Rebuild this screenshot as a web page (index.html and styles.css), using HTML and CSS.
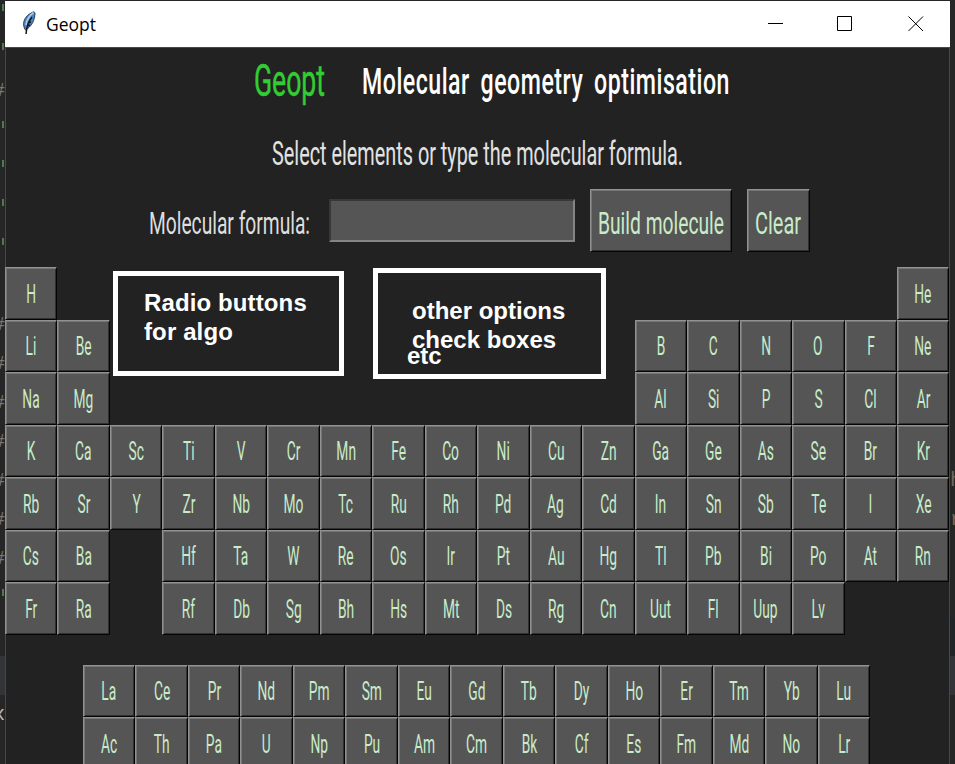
FILE: index.html
```
<!DOCTYPE html>
<html lang="en">
<head>
<meta charset="utf-8">
<title>Geopt</title>
<link rel="stylesheet" href="styles.css">
</head>
<body>
<div class="desktop">
<div class="gutter left">
<i class="tick"></i><i class="tick"></i><i>#</i><i class="tick"></i><i class="tick"></i><i class="tick"></i><i class="tick"></i><i></i><i>#</i><i>#</i><i>#</i><i>#</i><i>#</i><i>#</i><i>#</i><i class="tick"></i><i></i><i class="patch"></i><i class="bright">x</i>
</div>
<main class="window">
<header class="titlebar">
<svg class="feather" width="16" height="24" viewBox="0 0 16 24"><path d="M4.500 19C.8 14 2 5.500 12 1c2-.6 2.300 1 1.700 4-.8 6-4 11-9.200 14z" fill="#4b86c8" stroke="#333b48"/><path d="M12.500 1.500C9 4 6 8 5 14" stroke="#a8cdf0" stroke-width="1.600" fill="none"/><path d="M11 6C8 10 6 13 5 23M7 12l3-1M6 15l3-1" stroke="#101820" stroke-width="1.500" fill="none"/></svg>
<svg class="caption" width="60" height="46"><text x="1" y="30" textLength="50" lengthAdjust="spacingAndGlyphs">Geopt</text></svg>
<svg class="controls" width="182" height="46" fill="none" stroke="#000"><path d="M0 22.500h15M69.500 15.500h14v14h-14z"/><path d="M140.500 15.500l14.500 14.500M155 15.500l-14.500 14.500"/></svg>
</header>
<section class="content">
<svg class="row" width="943" height="60"><text class="brand" x="248" y="47.500" textLength="71" lengthAdjust="spacingAndGlyphs">Geopt</text><text class="heading" x="356" y="46" textLength="368" lengthAdjust="spacingAndGlyphs">Molecular geometry optimisation</text></svg>
<svg class="row" width="943" height="70"><text class="prompt" x="266" y="57" textLength="411" lengthAdjust="spacingAndGlyphs">Select elements or type the molecular formula.</text></svg>
<div class="form">
<svg class="label" width="162" height="63"><text x="0" y="45" textLength="161" lengthAdjust="spacingAndGlyphs">Molecular formula:</text></svg>
<input class="entry" type="text" aria-label="Molecular formula">
<button class="action build"><svg width="128" height="61"><text x="0" y="44" textLength="126" lengthAdjust="spacingAndGlyphs">Build molecule</text></svg></button>
<button class="action clear"><svg width="48" height="61"><text x="0" y="44" textLength="46" lengthAdjust="spacingAndGlyphs">Clear</text></svg></button>
</div>
<div class="table main">
<button><b>H</b></button><i class="gap16"></i><button><b>He</b></button>
<button><b>Li</b></button><button><b>Be</b></button><i class="gap10"></i><button><b>B</b></button><button><b>C</b></button><button><b>N</b></button><button><b>O</b></button><button><b>F</b></button><button><b>Ne</b></button>
<button><b>Na</b></button><button><b>Mg</b></button><i class="gap10"></i><button><b>Al</b></button><button><b>Si</b></button><button><b>P</b></button><button><b>S</b></button><button><b>Cl</b></button><button><b>Ar</b></button>
<button><b>K</b></button><button><b>Ca</b></button><button><b>Sc</b></button><button><b>Ti</b></button><button><b>V</b></button><button><b>Cr</b></button><button><b>Mn</b></button><button><b>Fe</b></button><button><b>Co</b></button><button><b>Ni</b></button><button><b>Cu</b></button><button><b>Zn</b></button><button><b>Ga</b></button><button><b>Ge</b></button><button><b>As</b></button><button><b>Se</b></button><button><b>Br</b></button><button><b>Kr</b></button>
<button><b>Rb</b></button><button><b>Sr</b></button><button><b>Y</b></button><button><b>Zr</b></button><button><b>Nb</b></button><button><b>Mo</b></button><button><b>Tc</b></button><button><b>Ru</b></button><button><b>Rh</b></button><button><b>Pd</b></button><button><b>Ag</b></button><button><b>Cd</b></button><button><b>In</b></button><button><b>Sn</b></button><button><b>Sb</b></button><button><b>Te</b></button><button><b>I</b></button><button><b>Xe</b></button>
<button><b>Cs</b></button><button><b>Ba</b></button><i></i><button><b>Hf</b></button><button><b>Ta</b></button><button><b>W</b></button><button><b>Re</b></button><button><b>Os</b></button><button><b>Ir</b></button><button><b>Pt</b></button><button><b>Au</b></button><button><b>Hg</b></button><button><b>Tl</b></button><button><b>Pb</b></button><button><b>Bi</b></button><button><b>Po</b></button><button><b>At</b></button><button><b>Rn</b></button>
<button><b>Fr</b></button><button><b>Ra</b></button><i></i><button><b>Rf</b></button><button><b>Db</b></button><button><b>Sg</b></button><button><b>Bh</b></button><button><b>Hs</b></button><button><b>Mt</b></button><button><b>Ds</b></button><button><b>Rg</b></button><button><b>Cn</b></button><button><b>Uut</b></button><button><b>Fl</b></button><button><b>Uup</b></button><button><b>Lv</b></button>
</div>
<div class="table series">
<button><b>La</b></button><button><b>Ce</b></button><button><b>Pr</b></button><button><b>Nd</b></button><button><b>Pm</b></button><button><b>Sm</b></button><button><b>Eu</b></button><button><b>Gd</b></button><button><b>Tb</b></button><button><b>Dy</b></button><button><b>Ho</b></button><button><b>Er</b></button><button><b>Tm</b></button><button><b>Yb</b></button><button><b>Lu</b></button>
<button><b>Ac</b></button><button><b>Th</b></button><button><b>Pa</b></button><button><b>U</b></button><button><b>Np</b></button><button><b>Pu</b></button><button><b>Am</b></button><button><b>Cm</b></button><button><b>Bk</b></button><button><b>Cf</b></button><button><b>Es</b></button><button><b>Fm</b></button><button><b>Md</b></button><button><b>No</b></button><button><b>Lr</b></button>
</div>
</section>
<div class="note algo">Radio buttons<br>for algo</div>
<div class="note options">other options<br>check boxes<span class="etc">etc</span></div>
</main>
<div class="gutter right">
<i></i><i></i><i></i><i></i><i></i><i></i><i></i><i></i><i></i><i></i><i></i><i></i><i>h</i><i>r</i><i></i><i></i><i class="shade"></i><i class="patch"></i>
</div>
</div>
</body>
</html>
```
FILE: styles.css
```
* { box-sizing: border-box; }
body {
  margin: 0;
  background: #262626;
  overflow: hidden;
  font-family: Roboto, "Liberation Sans", sans-serif;
}
.desktop {
  display: grid;
  grid-template-columns: 5px 945px 5px;
  height: 764px;
  overflow: hidden;
}
.gutter {
  display: grid;
  grid-template-columns: 5px;
  grid-auto-rows: 39px;
  align-content: start;
  margin-top: -7px;
  overflow: hidden;
}
.gutter i {
  display: flex;
  justify-content: flex-end;
  align-items: center;
  font: 20px "Liberation Mono", monospace;
  color: #777;
}
.gutter .tick { align-items: flex-start; padding: 11px 1px 0 0; }
.tick::before { content: ""; width: 2px; height: 7px; background: #4f7a4b; }
.gutter .patch { background: #323437; }
.gutter .shade { background: #222528; }
.gutter .bright { color: #bbb; }
.gutter.right i { justify-content: flex-start; color: #776655; }

.window {
  position: relative;
  margin-top: 1px;
  height: 763px;
  background: #222;
  overflow: hidden;
}
.titlebar {
  display: flex;
  height: 46px;
  background: #fff;
}
.feather { margin: 10px 8px 0 16px; }
.caption { font: 18.500px "Open Sans", "Noto Sans", sans-serif; }
.controls { margin-left: auto; }
.content {
  border: 1px solid #484848;
  border-bottom: 0;
  height: 717px;
}
svg { display: block; flex: none; }
.brand { font-size: 44px; fill: #32cd32; stroke: #32cd32; stroke-width: .5px; }
.heading { font-size: 36px; font-weight: 500; word-spacing: 7px; letter-spacing: .8px; fill: #fff; }
.prompt { font-size: 33px; fill: #e2e2e2; }
.form {
  display: flex;
  height: 89px;
  padding: 11px 0 0 143px;
}
.label { font-size: 31.500px; fill: #dedede; }
.entry {
  width: 246px;
  height: 43px;
  margin: 10px 15px 0 18px;
  background: #555;
  border: 2px solid;
  border-color: #383838 #858585 #858585 #383838;
}
button {
  padding: 0;
  font-family: inherit;
  background: #555;
  border: 1px solid;
  border-color: #929292 #050505 #050505 #929292;
  border-radius: 0;
  box-shadow: inset 1px 1px #757575, inset -1px -1px #303030;
  color: #c8ecc9;
}
.action {
  display: flex;
  height: 63px;
  padding-left: 7px;
  font-size: 31.500px;
  fill: #c8ecc9;
}
.build { width: 142px; }
.clear { width: 63px; margin-left: 15px; }
.table {
  display: grid;
  grid-auto-rows: 52.500px;
}
.main {
  grid-template-columns: repeat(18, 52.470px);
  margin-left: -1px;
}
.series {
  grid-template-columns: repeat(15, 52.470px);
  margin: 30px 0 0 77px;
}
.table button {
  display: flex;
  align-items: center;
  justify-content: center;
}
.table b {
  padding-top: 1px;
  font-size: 25.500px;
  font-weight: 400;
  line-height: 30px;
  transform: scaleX(.54);
}
.gap16 { grid-column: span 16; }
.gap10 { grid-column: span 10; }
.note {
  position: absolute;
  border: 5px solid #fff;
  color: #fff;
  font: bold 24px/29px "Liberation Sans", Arial, sans-serif;
}
.algo {
  left: 108px;
  top: 270px;
  width: 231px;
  height: 105px;
  padding: 12px 0 0 26px;
  letter-spacing: .12px;
}
.options {
  left: 368px;
  top: 267px;
  width: 233px;
  height: 111px;
  padding: 23px 0 0 34px;
}
.etc { position: absolute; left: 29px; top: 68px; }
```
